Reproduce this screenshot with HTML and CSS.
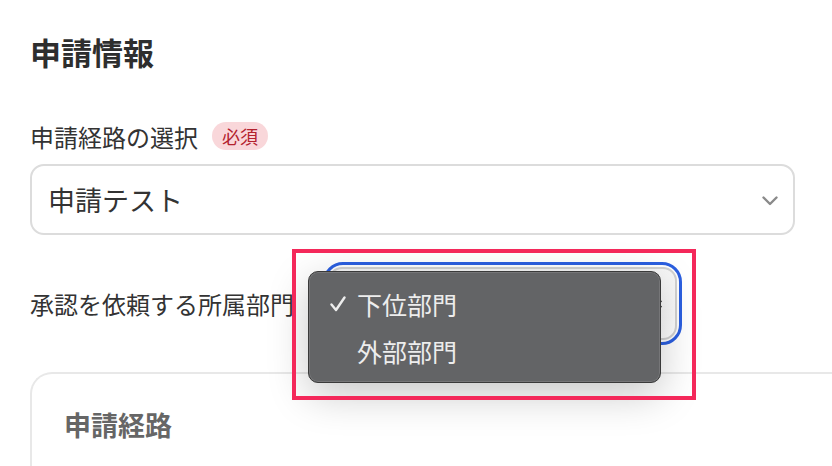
FILE: index.html
```html
<!DOCTYPE html>
<html lang="ja">
<head>
    <meta charset="UTF-8">
    <meta name="viewport" content="width=device-width, initial-scale=1.0">
    <link rel="stylesheet" href="styles.css">
</head>
<body>
    <div class="page">
        <h1 class="title">申請情報</h1>

        <div class="field">
            <div class="field-label">
                <span>申請経路の選択</span>
                <span class="badge">必須</span>
            </div>
            <div class="select">
                <span>申請テスト</span>
                <svg class="chevron" width="16" height="10" viewBox="0 0 16 10">
                    <path d="M1.5 1.5 L8 8 L14.5 1.5" fill="none" stroke="#8a8a8a" stroke-width="2.4" stroke-linecap="round" stroke-linejoin="round"/>
                </svg>
            </div>
        </div>

        <div class="row">
            <span class="row-label">承認を依頼する所属部門</span>
            <div class="focus-ring">
                <div class="select-inner">
                    <svg class="updown" width="10" height="16" viewBox="0 0 10 16">
                        <path d="M1.5 6 L5 2 L8.5 6 M1.5 10 L5 14 L8.5 10" fill="none" stroke="#444" stroke-width="1.6"/>
                    </svg>
                </div>
            </div>
        </div>

        <div class="card">
            <h2 class="card-title">申請経路</h2>
        </div>
    </div>

    <!-- native popup menu opened over the second select -->
    <div class="menu">
        <div class="menu-item">
            <svg class="check" width="16" height="16" viewBox="0 0 16 16">
                <path d="M1.5 8.5 L6 14 L14.5 1.5" fill="none" stroke="#ededed" stroke-width="2.4" stroke-linecap="round" stroke-linejoin="round"/>
            </svg>
            下位部門
        </div>
        <div class="menu-item"><span class="check"></span>外部部門</div>
    </div>

    <div class="highlight"></div>
</body>
</html>
```

FILE: styles.css
```css
body {
    margin: 0;
    background: #fff;
    color: #333;
    font-family: "Noto Sans CJK JP", "Noto Sans", sans-serif;
    overflow: hidden;
}
.page {
    padding: 28px 37px 0 30px;
}
.title {
    margin: 0;
    font-size: 31px;
    line-height: 48px;
    font-weight: bold;
    color: #2e2e2e;
}
.field {
    margin-top: 44px;
}
.field-label {
    display: flex;
    align-items: center;
    gap: 14px;
    height: 32px;
    font-size: 24px;
}
.badge {
    display: inline-flex;
    align-items: center;
    justify-content: center;
    width: 56px;
    height: 28px;
    border-radius: 14px;
    background: #f9d7da;
    color: #b3222e;
    font-size: 18px;
}
.select {
    margin-top: 12px;
    height: 71px;
    box-sizing: border-box;
    border: 2px solid #dcdcdc;
    border-radius: 14px;
    display: flex;
    align-items: center;
    justify-content: space-between;
    padding: 0 15px 0 16px;
    font-size: 27px;
    color: #333;
}
.chevron {
    margin-top: 2px;
}
.row {
    margin-top: 27px;
    display: flex;
    align-items: center;
}
.row-label {
    font-size: 24px;
    width: 293px;
    white-space: nowrap;
}
.focus-ring {
    width: 359px;
    height: 83px;
    box-sizing: border-box;
    border: 3px solid #2b5fe0;
    border-radius: 20px;
    padding: 2px;
}
.select-inner {
    height: 100%;
    box-sizing: border-box;
    border: 2px solid #d2d2d2;
    border-radius: 14px;
    background: linear-gradient(#f6f6f6, #ffffff);
    display: flex;
    align-items: center;
    justify-content: flex-end;
    padding-right: 12px;
}
.card {
    margin-top: 27px;
    margin-right: -37px;
    border: 2px solid #e8e8e8;
    border-right: none;
    border-radius: 22px 0 0 0;
    padding: 33px 34px 40px 32px;
}
.card-title {
    margin: 0;
    font-size: 27px;
    line-height: 36px;
    font-weight: bold;
    color: #666;
}
.menu {
    position: absolute;
    left: 308px;
    top: 271px;
    width: 353px;
    height: 112px;
    box-sizing: border-box;
    padding-top: 8px;
    background: #636466;
    border: 1px solid #3a3a3a;
    border-radius: 10px;
    box-shadow: 0 12px 40px rgba(0, 0, 0, 0.22), inset 0 0 0 1px rgba(255, 255, 255, 0.12);
    color: #ededed;
    font-size: 25px;
}
.menu-item {
    display: flex;
    align-items: center;
    height: 47px;
    padding-left: 21px;
}
.check {
    width: 16px;
    margin-right: 11px;
}
.highlight {
    position: absolute;
    left: 292px;
    top: 249px;
    width: 404px;
    height: 151px;
    box-sizing: border-box;
    border: 4px solid #f4285a;
}
```
